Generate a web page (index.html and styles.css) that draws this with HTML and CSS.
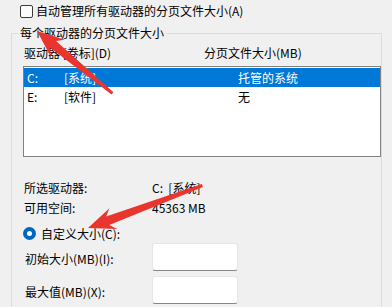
FILE: index.html
```html
<!DOCTYPE html>
<html lang="zh-CN">
<head>
    <meta charset="UTF-8">
    <title>虚拟内存</title>
    <link rel="stylesheet" href="styles.css">
</head>
<body>
    <div class="page">
        <label class="auto-row">
            <span class="checkbox"></span>
            <span>自动管理所有驱动器的分页文件大小(A)</span>
        </label>

        <fieldset class="group">
            <legend>每个驱动器的分页文件大小</legend>
            <div class="group-body">
                <div class="list-head">
                    <span class="head-drive">驱动器 [卷标](D)</span>
                    <span class="head-size">分页文件大小(MB)</span>
                </div>
                <div class="drive-list">
                    <div class="drive-row selected">
                        <span class="col-drive">C:</span>
                        <span class="col-label">[系统]</span>
                        <span class="col-size">托管的系统</span>
                    </div>
                    <div class="drive-row">
                        <span class="col-drive">E:</span>
                        <span class="col-label">[软件]</span>
                        <span class="col-size">无</span>
                    </div>
                </div>

                <div class="info">
                    <span>所选驱动器:</span><span>C:&nbsp;&nbsp;[系统]</span>
                    <span>可用空间:</span><span>45363 MB</span>
                </div>

                <label class="radio-row">
                    <span class="radio"></span>
                    <span>自定义大小(C):</span>
                </label>

                <div class="field-row">
                    <span class="field-label">初始大小(MB)(I):</span>
                    <span class="text-box"></span>
                </div>
                <div class="field-row">
                    <span class="field-label">最大值(MB)(X):</span>
                    <span class="text-box"></span>
                </div>
            </div>
        </fieldset>

        <svg class="arrows" width="392" height="307" viewBox="0 0 392 307">
            <polygon transform="translate(37 31) rotate(219.6)" points="0,0 -27,-11 -21,-4.5 -98,-1.5 -98,1.5 -21,4.5 -27,11"/>
            <polygon transform="translate(88 228) rotate(159.6)" points="0,0 -27,-11 -21,-4.5 -122,-1.5 -122,1.5 -21,4.5 -27,11"/>
        </svg>
    </div>
</body>
</html>
```

FILE: styles.css
```css
/* --- Base --- */
body {
    margin: 0;
    background-color: #f0f0f0;
    font-family: "Noto Sans CJK SC", "Noto Sans", sans-serif;
    font-size: 12px;
    color: #000000;
}

.page {
    position: relative; /* anchor for the arrows overlay */
    width: 392px;
    height: 307px;
    overflow: hidden;
}

/* --- Top checkbox --- */
.auto-row {
    display: flex;
    align-items: center;
    gap: 3px;
    padding: 3px 0 0 20px;
    height: 16px;
    line-height: 16px;
}

.checkbox {
    width: 11px;
    height: 11px;
    border: 1px solid #3a3a3a;
    border-radius: 2px;
    background-color: #fbfbfb;
}

/* --- Group box --- */
.group {
    box-sizing: border-box;
    width: 371px;
    margin: 6px 0 0 11px;
    padding: 0;
    border: 1px solid #dcdcdc;
    border-radius: 0;
}

.group legend {
    margin-left: 6px;
    padding: 0 2px;
    line-height: 16px;
}

.group-body {
    padding: 4px 0 0 11px;
}

.list-head {
    display: flex;
    height: 16px;
    line-height: 16px;
    margin-bottom: 5px;
}

.head-drive {
    width: 180px;
    padding-left: 1px;
}

/* --- Drive list --- */
.drive-list {
    box-sizing: border-box;
    height: 91px;
    padding-top: 1px;
    border: 1px solid #828282;
    background-color: #ffffff;
}

.drive-row {
    display: flex;
    height: 19px;
    line-height: 19px;
}

.drive-row.selected {
    background-color: #0078d7;
    color: #ffffff;
}

.col-drive {
    width: 37px;
    padding-left: 3px;
}

.col-label {
    width: 174px;
}

/* --- Selected drive info --- */
.info {
    display: grid;
    grid-template-columns: 128px 1fr;
    margin: 21px 0 0 1px;
    line-height: 20px;
}

/* --- Custom size --- */
.radio-row {
    display: flex;
    align-items: center;
    gap: 5px;
    height: 20px;
    margin: 5px 0 0 0;
}

.radio {
    box-sizing: border-box;
    width: 13px;
    height: 13px;
    border-radius: 50%;
    border: 4px solid #0067c0;
    background-color: #ffffff;
}

.field-row {
    display: flex;
    align-items: center;
    margin-bottom: 5px;
}

.field-label {
    width: 127px;
    padding: 3px 0 0 2px;
}

.text-box {
    box-sizing: border-box;
    width: 86px;
    height: 28px;
    background-color: #ffffff;
    border: 1px solid #e6e6e6;
    border-bottom: 1px solid #868686;
    border-radius: 3px;
}

/* --- Red annotation arrows --- */
.arrows {
    position: absolute;
    top: 0;
    left: 0;
    fill: #e9352d;
}
```
